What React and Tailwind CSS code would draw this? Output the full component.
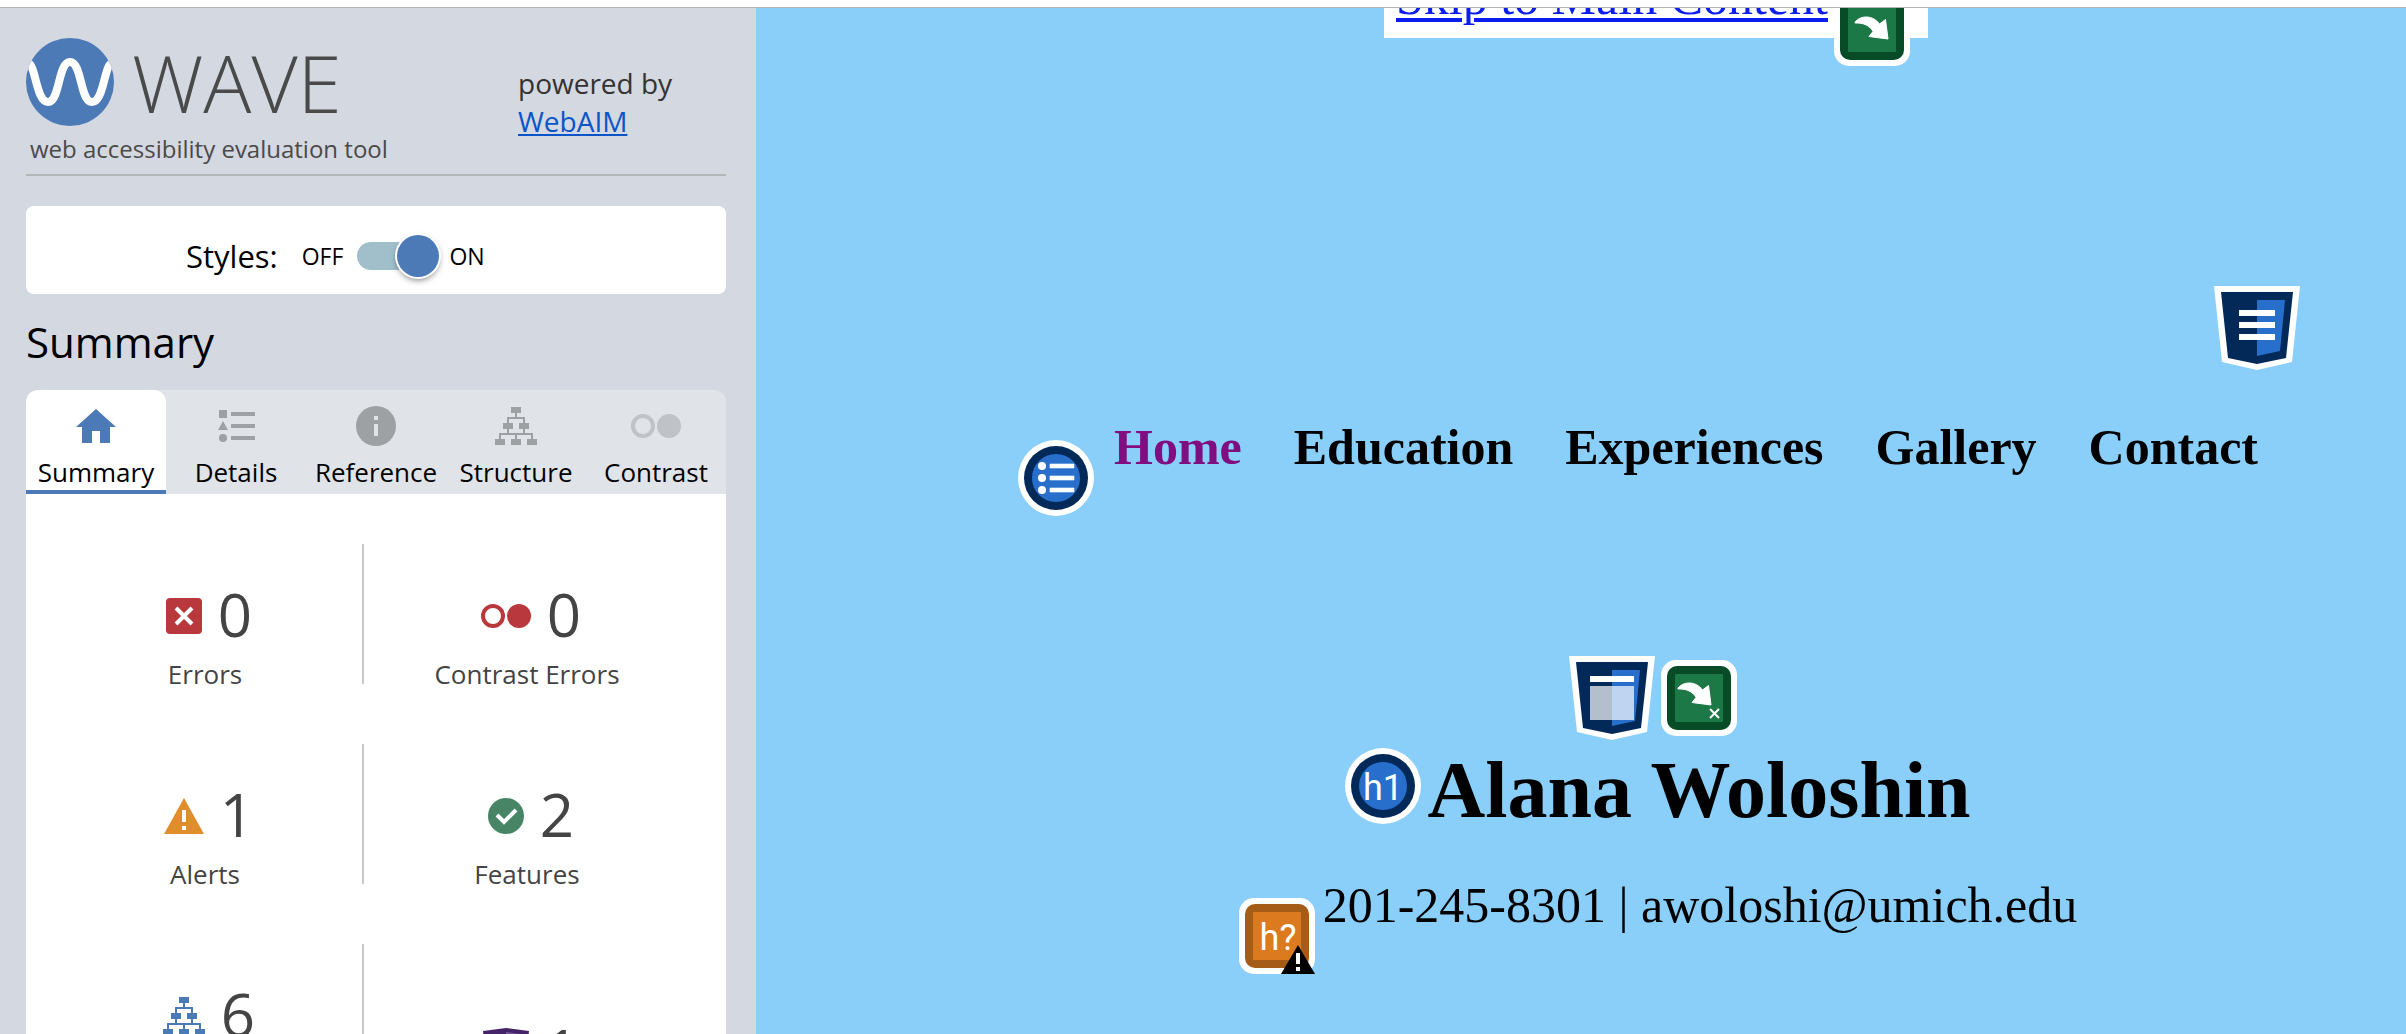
const SANS = "font-['Open_Sans','Noto_Sans',sans-serif]";
const SERIF = "font-['Liberation_Serif','Times_New_Roman',serif]";

function WaveLogo() {
  return (
    <svg className="size-[88px] shrink-0" viewBox="0 0 88 88" aria-hidden="true">
      <defs>
        <clipPath id="disc"><circle cx="44" cy="44" r="44" /></clipPath>
      </defs>
      <circle cx="44" cy="44" r="44" fill="#4b7ab6" />
      <path
        d="M2 25C10 27 10 64 22 64C34 64 32 24 44 24C56 24 54 64 66 64C78 64 78 27 86 25"
        fill="none" stroke="#fff" strokeWidth="8" clipPath="url(#disc)"
      />
    </svg>
  );
}

function HomeIcon() {
  return (
    <svg width="40" height="34" viewBox="0 0 40 34" fill="#4b7ab6" aria-hidden="true">
      <path d="M20 0L40 18H34V34H24V22H16V34H6V18H0Z" />
    </svg>
  );
}
function DetailsIcon() {
  return (
    <svg width="37" height="32" viewBox="0 0 37 32" fill="#9da1a4" aria-hidden="true">
      <path d="M1 0H9V8H1ZM5 11L10 20H0ZM13 2H37V6H13ZM13 14H37V18H13ZM13 26H37V30H13Z" />
      <circle cx="5" cy="28" r="4" />
    </svg>
  );
}
function InfoIcon() {
  return (
    <svg width="40" height="40" viewBox="0 0 40 40" aria-hidden="true">
      <circle cx="20" cy="20" r="20" fill="#9da1a4" />
      <path d="M18 10H22V14H18ZM18 18H22V30H18Z" fill="#e0e3e8" />
    </svg>
  );
}
function TreeIcon({ color }) {
  return (
    <svg width="42" height="38" viewBox="0 0 42 38" fill={color} aria-hidden="true">
      <path d="M16 0H26V6H16ZM8 16H18V22H8ZM24 16H34V22H24ZM0 32H10V38H0ZM16 32H26V38H16ZM32 32H42V38H32Z" />
      <path d="M21 6V11M13 16V11H29V16M13 22V27M29 22V27M5 32V27H37V32M21 27V32" fill="none" stroke={color} strokeWidth="2" />
    </svg>
  );
}
function ContrastIcon({ color }) {
  return (
    <svg width="50" height="24" viewBox="0 0 50 24" aria-hidden="true">
      <circle cx="12" cy="12" r="10" fill="none" stroke={color} strokeWidth="4" />
      <circle cx="38" cy="12" r="12" fill={color} />
    </svg>
  );
}
function ErrorIcon() {
  return (
    <svg width="36" height="36" viewBox="0 0 36 36" aria-hidden="true">
      <rect width="36" height="36" rx="4" fill="#b8383d" />
      <path d="M10 10L26 26M26 10L10 26" stroke="#fff" strokeWidth="4" />
    </svg>
  );
}
function AlertIcon() {
  return (
    <svg width="40" height="36" viewBox="0 0 40 36" aria-hidden="true">
      <path d="M20 0L40 36H0Z" fill="#e08e2b" />
      <path d="M18 12H22V24H18ZM18 28H22V32H18Z" fill="#fff" />
    </svg>
  );
}
function FeatureIcon() {
  return (
    <svg width="36" height="36" viewBox="0 0 36 36" aria-hidden="true">
      <circle cx="18" cy="18" r="18" fill="#488567" />
      <path d="M9 17L16 24L28 12" fill="none" stroke="#fff" strokeWidth="4" />
    </svg>
  );
}
function AriaIcon() {
  return (
    <svg width="46" height="48" viewBox="0 0 46 48" aria-hidden="true">
      <path d="M0 3L23 0L46 3L42 42L23 48L4 42Z" fill="#46246a" />
      <path d="M23 4L42 7L38 39L23 44Z" fill="#7a5a9c" />
    </svg>
  );
}

function Shield({ children }) {
  return (
    <svg className="h-[84px] w-[86px] shrink-0" viewBox="0 0 86 84" aria-hidden="true">
      <path d="M0 0H86L78 76L43 84L8 76Z" fill="#fff" />
      <path d="M7 6H79L72 72L43 78L14 72Z" fill="#032959" />
      <path d="M43 14H71L66 65L43 70Z" fill="#276fcb" />
      {children}
    </svg>
  );
}
function NavShield() {
  return (
    <Shield>
      <path d="M25 24H61V30H25ZM25 36H61V42H25ZM25 48H61V54H25Z" fill="#fff" />
    </Shield>
  );
}
function HeaderShield() {
  return (
    <Shield>
      <path d="M21 20H65V26H21Z" fill="#fff" />
      <path d="M21 30H65V64H21Z" fill="#fff" fillOpacity="0.7" />
    </Shield>
  );
}
function SkipIcon({ broken }) {
  return (
    <svg className="size-[76px] shrink-0" viewBox="0 0 76 76" aria-hidden="true">
      <rect width="76" height="76" rx="15" fill="#fff" />
      <rect x="6" y="6" width="64" height="64" rx="10" fill="#074b27" />
      <rect x="14" y="14" width="48" height="48" rx="1" fill="#1c7947" />
      <g transform={broken ? undefined : "translate(4 4)"}>
        <path d="M17 28C23 21 35 21 41.500 30L47.500 25.500L50 45L31 42.500L35 37.500C32 31.500 25 28.500 17 29Z" fill="#fff" stroke="#fff" strokeLinejoin="round" />
      </g>
      {broken && <path d="M49 49L58 58M58 49L49 58" stroke="#fff" strokeWidth="2" />}
    </svg>
  );
}
function ListIcon() {
  return (
    <svg className="size-[76px] shrink-0" viewBox="0 0 76 76" aria-hidden="true">
      <circle cx="38" cy="38" r="38" fill="#fff" />
      <circle cx="38" cy="38" r="32" fill="#032959" />
      <circle cx="38" cy="38" r="24" fill="#276fcb" />
      <g fill="#fff">
        <circle cx="24" cy="26" r="4" />
        <circle cx="24" cy="38" r="4" />
        <circle cx="24" cy="50" r="4" />
        <path d="M32 24H56V28H32ZM32 36H56V40H32ZM32 48H56V52H32Z" stroke="#fff" strokeWidth="0.6" />
      </g>
    </svg>
  );
}
function H1Icon() {
  return (
    <svg className="size-[76px] shrink-0" viewBox="0 0 76 76" aria-hidden="true">
      <circle cx="38" cy="38" r="38" fill="#fff" />
      <circle cx="38" cy="38" r="32" fill="#032959" />
      <circle cx="38" cy="38" r="24" fill="#276fcb" />
      <text x="38" y="52" textAnchor="middle" fontSize="36" fontWeight="400" fontFamily="Roboto" fill="#fff">h1</text>
    </svg>
  );
}
function PossibleHeadingIcon() {
  return (
    <svg className="size-[76px] shrink-0" viewBox="0 0 76 76" aria-hidden="true">
      <rect width="76" height="76" rx="15" fill="#fff" />
      <rect x="6" y="6" width="64" height="64" rx="10" fill="#a55c16" />
      <rect x="14" y="14" width="48" height="48" rx="1" fill="#db7a1f" />
      <text x="39" y="52" textAnchor="middle" fontSize="36" fontFamily="Roboto" fill="#fff">h?</text>
      <path d="M59 47L76 76H42Z" fill="#000" />
      <path d="M57 55H61V66H57ZM57 69H61V73H57Z" fill="#fff" />
    </svg>
  );
}

const tabs = [
  { name: "Summary", icon: <HomeIcon />, active: true },
  { name: "Details", icon: <DetailsIcon /> },
  { name: "Reference", icon: <InfoIcon /> },
  { name: "Structure", icon: <TreeIcon color="#9da1a4" /> },
  { name: "Contrast", icon: <ContrastIcon color="#bfc2c6" /> },
];

const counts = [
  { name: "Errors", count: 0, icon: <ErrorIcon /> },
  { name: "Contrast Errors", count: 0, icon: <ContrastIcon color="#b8383d" /> },
  { name: "Alerts", count: 1, icon: <AlertIcon /> },
  { name: "Features", count: 2, icon: <FeatureIcon /> },
  { name: "Structural Elements", count: 6, icon: <TreeIcon color="#4b7ab6" /> },
  { name: "ARIA", count: 1, icon: <AriaIcon />, low: true },
];

function Sidebar() {
  return (
    <aside className={`${SANS} w-[756px] shrink-0 overflow-hidden bg-[#d4d8e0] pr-[30px] pl-[26px] text-black`}>
      <header className="flex h-[168px] border-b-2 border-[#b2b7b9] pt-[30px]">
        <div className="w-[492px]">
          <div className="flex items-center gap-[18px] text-[#4a4a4a]">
            <WaveLogo />
            <span className="text-[80px] leading-[88px] font-light">WAVE</span>
          </div>
          <p className="mt-1.5 pl-1 text-2xl leading-[34px] text-[#4a4a4a]">web accessibility evaluation tool</p>
        </div>
        <p className="pt-[26px] text-[28px] leading-[38px] text-[#333]">
          powered by<br />
          <a href="#webaim" className="text-[#0b55c9] underline">WebAIM</a>
        </p>
      </header>

      <div className="mt-[30px] flex h-[88px] items-center rounded-lg bg-white pt-3 pl-[160px]">
        <span className="mr-6 text-[31px]" id="styles-label">Styles:</span>
        <label className="flex items-center text-[23px]">
          OFF
          <span className="relative mr-2.5 ml-3.5 flex h-7 w-[82px] items-center rounded-full">
            <input
              type="checkbox" role="switch" defaultChecked aria-labelledby="styles-label"
              className="h-7 w-[70px] appearance-none rounded-full bg-[#a0bfca]"
            />
            <span className="pointer-events-none absolute right-0 size-[42px] rounded-full bg-[#4b7ab6] shadow-[0_0_0_2px_#fff,0_3px_6px_rgba(0,0,0,0.5)]" />
          </span>
          ON
        </label>
      </div>

      <h2 className="mt-[18px] mb-[18px] text-[42px] leading-[60px]">Summary</h2>

      <div role="tablist" className="grid h-[104px] grid-cols-5 rounded-t-xl bg-[#e0e3e8]">
        {tabs.map((t) => (
          <button
            key={t.name} role="tab" aria-selected={!!t.active}
            className={t.active
              ? "flex flex-col items-center rounded-t-xl border-b-4 border-[#4b7ab6] bg-white pt-4"
              : "flex flex-col items-center pt-4"}
          >
            <span className="flex h-10 items-center">{t.icon}</span>
            <span className="mt-2 text-[26px] leading-9">{t.name}</span>
          </button>
        ))}
      </div>

      <ul className="grid grid-cols-[316fr_326fr] gap-y-[60px] bg-white pt-[50px] pr-9 pl-[22px]">
        {counts.map((c) => (
          <li key={c.name} className="flex h-[140px] flex-col items-center border-[#c8c8c8] text-[#444] odd:border-r-2">
            <div className={c.low ? "flex items-center gap-4 pt-[68px] pl-2" : "flex items-center gap-4 pt-8 pl-2"}>
              {c.icon}
              <span className="pb-1 text-[60px] leading-[76px]">{c.count}</span>
            </div>
            <span className="text-[26px] leading-9">{c.name}</span>
          </li>
        ))}
      </ul>
    </aside>
  );
}

function SitePreview() {
  return (
    <main className={`${SERIF} flex min-w-0 grow flex-col items-center overflow-hidden bg-[#8acff9] pl-[154px] text-[50px] leading-[56px] text-black`}>
      <div className="-mt-[39px] mr-1 flex h-[69px] w-[544px] items-start bg-white pl-3">
        <a href="#main" className="whitespace-nowrap text-[#0b1eee] underline decoration-4 underline-offset-4">Skip to Main Content</a>
        <span className="mt-[21px] ml-1.5"><SkipIcon /></span>
      </div>

      <nav className="mt-[248px] flex w-full max-w-[1284px] flex-col">
        <div className="flex justify-end"><NavShield /></div>
        <div className="mt-[49px] flex items-start pl-0.5">
          <span className="mt-[21px] mr-5"><ListIcon /></span>
          <ul className="flex gap-[52px] font-bold whitespace-nowrap">
            <li><a href="#home" className="text-[#800e80]">Home</a></li>
            <li><a href="#education">Education</a></li>
            <li><a href="#experiences">Experiences</a></li>
            <li><a href="#gallery">Gallery</a></li>
            <li><a href="#contact">Contact</a></li>
          </ul>
        </div>
      </nav>

      <header className="mt-[140px] flex flex-col items-center">
        <div className="flex items-center gap-1.5 pr-2.5">
          <HeaderShield />
          <SkipIcon broken />
        </div>
        <h1 className="mt-2 flex items-start gap-1.5 text-[80px] leading-[84px] font-bold whitespace-nowrap">
          <H1Icon />
          Alana Woloshin
        </h1>
        <p className="mt-[45px] flex items-start gap-2 whitespace-nowrap">
          <span className="mt-[21px]"><PossibleHeadingIcon /></span>
          201-245-8301 | awoloshi@umich.edu
        </p>
      </header>
    </main>
  );
}

export default function App() {
  return (
    <div className="flex h-screen flex-col overflow-hidden bg-white">
      <div className="h-2 shrink-0 border-b border-[#b4b4b4] bg-white" />
      <div className="flex min-h-0 grow overflow-hidden">
        <Sidebar />
        <SitePreview />
      </div>
    </div>
  );
}
